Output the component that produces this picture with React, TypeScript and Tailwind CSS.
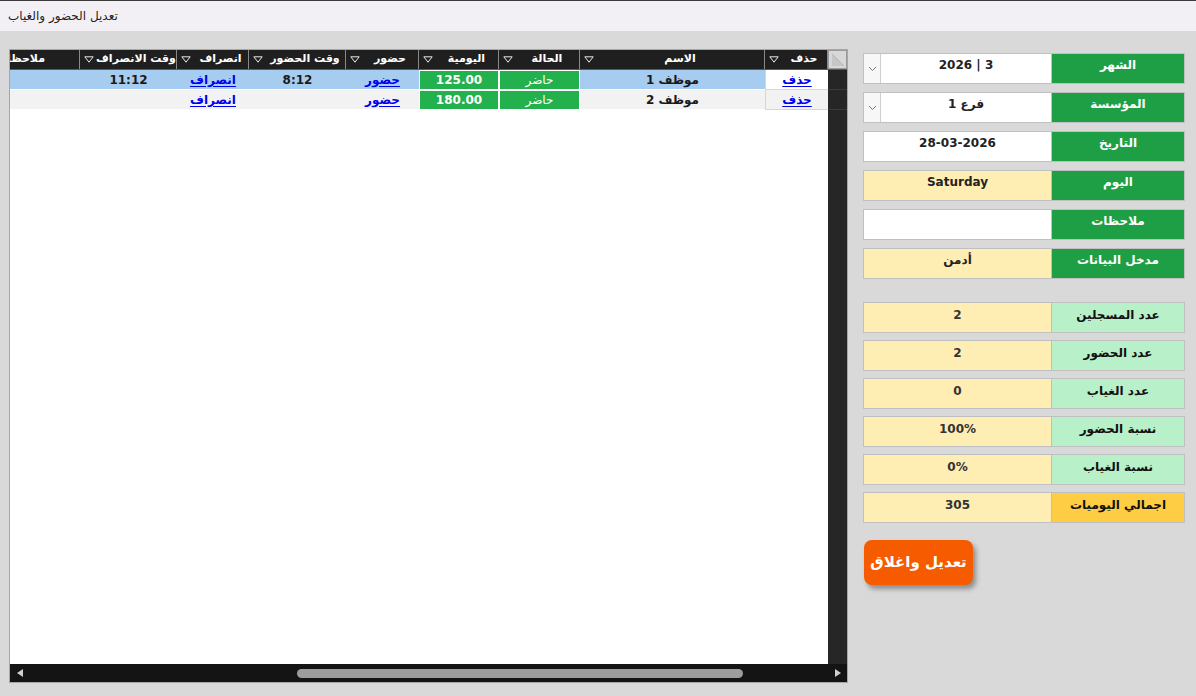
import React from 'react';

type Row = {
    name: string;
    status: string;
    daily: string;
    inTime: string;
    outTime: string;
    selected: boolean;
};

const rows: Row[] = [
    { name: 'موظف 1', status: 'حاضر', daily: '125.00', inTime: '8:12', outTime: '11:12', selected: true },
    { name: 'موظف 2', status: 'حاضر', daily: '180.00', inTime: '', outTime: '', selected: false },
];

// left-to-right on screen; the sheet itself reads right-to-left
const columns = [
    { title: 'وقت الانصراف', w: 'w-[97px]' },
    { title: 'انصراف', w: 'w-[72px]' },
    { title: 'وقت الحضور', w: 'w-[97px]' },
    { title: 'حضور', w: 'w-[73px]' },
    { title: 'اليومية', w: 'w-[80px]' },
    { title: 'الحالة', w: 'w-[81px]' },
    { title: 'الاسم', w: 'w-[185px]' },
    { title: 'حذف', w: 'w-[63px]' },
];

const infoFields = [
    { label: 'الشهر', value: '3 | 2026', combo: true, tone: 'white' },
    { label: 'المؤسسة', value: 'فرع 1', combo: true, tone: 'white' },
    { label: 'التاريخ', value: '28-03-2026', combo: false, tone: 'white' },
    { label: 'اليوم', value: 'Saturday', combo: false, tone: 'yellow' },
    { label: 'ملاحظات', value: '', combo: false, tone: 'white' },
    { label: 'مدخل البيانات', value: 'أدمن', combo: false, tone: 'yellow' },
];

const stats = [
    { label: 'عدد المسجلين', value: '2', total: false },
    { label: 'عدد الحضور', value: '2', total: false },
    { label: 'عدد الغياب', value: '0', total: false },
    { label: 'نسبة الحضور', value: '100%', total: false },
    { label: 'نسبة الغياب', value: '0%', total: false },
    { label: 'اجمالي اليوميات', value: '305', total: true },
];

function FilterArrow() {
    return (
        <svg width="10" height="7" viewBox="0 0 10 7" className="shrink-0">
            <path d="M0.8 0.8 H9.2 L5 6.2 Z" fill="none" stroke="#e8e8e8" strokeWidth="1" />
        </svg>
    );
}

function HeaderCell({ title, w }: { title: string; w: string }) {
    return (
        <div className={`${w} shrink-0 h-full flex items-center pl-[4px] border-r border-[#8a8a8a]`}>
            <FilterArrow />
            <span dir="rtl" className="flex-1 pl-[2px] text-center text-white font-bold text-[11px] whitespace-nowrap">
                {title}
            </span>
        </div>
    );
}

function LinkText({ children }: { children: React.ReactNode }) {
    return (
        <span dir="rtl" className="text-[#0000ee] font-bold underline underline-offset-2 text-[12px]">
            {children}
        </span>
    );
}

function GridRow({ row }: { row: Row }) {
    const bg = row.selected ? 'bg-[#a6cdef]' : 'bg-[#f2f2f2]';
    const cell = `shrink-0 h-full flex items-center justify-center border-b border-white text-[12px] font-bold text-[#1a1a1a] ${bg}`;
    const green = 'shrink-0 h-full flex items-center justify-center border border-white bg-[#22b14c] text-white text-[12px]';
    return (
        <div className="flex h-[20px]">
            <div className={`w-[70px] ${cell}`} />
            <div className={`w-[97px] ${cell}`}>{row.outTime}</div>
            <div className={`w-[72px] ${cell}`}>
                <LinkText>انصراف</LinkText>
            </div>
            <div className={`w-[97px] ${cell}`}>{row.inTime}</div>
            <div className={`w-[73px] ${cell}`}>
                <LinkText>حضور</LinkText>
            </div>
            <div className={`w-[80px] font-bold ${green}`}>{row.daily}</div>
            <div className={`w-[81px] ${green}`} dir="rtl">
                {row.status}
            </div>
            <div className={`w-[185px] ${cell}`} dir="rtl">
                {row.name}
            </div>
            <div
                className={`w-[63px] shrink-0 h-full flex items-center justify-center border-l border-b border-[#d6d6d6] ${
                    row.selected ? 'bg-white' : 'bg-[#f2f2f2]'
                }`}
            >
                <LinkText>حذف</LinkText>
            </div>
            <div className="w-[19px] shrink-0 h-full bg-[#262626] border-b border-[#3a3a3a]" />
        </div>
    );
}

function AttendanceGrid() {
    return (
        <div className="w-[839px] h-[634px] border border-[#a6a6a6] bg-white flex flex-col">
            {/* header */}
            <div className="flex h-[20px] bg-[#1f1f1f] border-b border-[#5a5a5a]">
                <div className="w-[70px] shrink-0 h-full overflow-hidden flex justify-end border-r border-[#8a8a8a]">
                    <div className="w-[132px] shrink-0 h-full flex items-center pl-[5px]">
                        <FilterArrow />
                        <span dir="rtl" className="flex-1 text-center text-white font-bold text-[11px] whitespace-nowrap">
                            ملاحظات
                        </span>
                    </div>
                </div>
                {columns.map((c) => (
                    <HeaderCell key={c.title} title={c.title} w={c.w} />
                ))}
                <div className="w-[19px] shrink-0 h-full bg-[#d8d8d8] border border-[#9a9a9a]">
                    <svg width="17" height="17" viewBox="0 0 17 17">
                        <path d="M3 3 L15 15 H3 Z" fill="#c6c6c6" />
                        <path d="M3 3 L15 15" stroke="#b4b4b4" strokeWidth="1" />
                    </svg>
                </div>
            </div>

            <div className="flex-1 flex flex-col min-h-0">
                {rows.map((r) => (
                    <GridRow key={r.name} row={r} />
                ))}
                <div className="flex-1 flex">
                    <div className="flex-1 bg-white" />
                    <div className="w-[19px] shrink-0 bg-[#262626]" />
                </div>
            </div>

            {/* horizontal scrollbar */}
            <div className="h-[18px] shrink-0 bg-[#141414] flex items-center px-[3px]">
                <svg width="10" height="10" viewBox="0 0 10 10" className="shrink-0 ml-[2px]">
                    <path d="M8 1 V9 L2 5 Z" fill="#d0d0d0" />
                </svg>
                <div className="w-[272px] shrink-0" />
                <div className="w-[446px] h-[9px] shrink-0 rounded-full bg-[#9c9c9c]" />
                <div className="flex-1" />
                <svg width="10" height="10" viewBox="0 0 10 10" className="shrink-0 mr-[1px]">
                    <path d="M2 1 V9 L8 5 Z" fill="#d0d0d0" />
                </svg>
            </div>
        </div>
    );
}

function ComboButton() {
    return (
        <div className="w-[17px] shrink-0 h-full bg-[#f7f7f7] border-r border-[#cfcfcf] flex items-center justify-center">
            <svg width="9" height="6" viewBox="0 0 9 6">
                <path d="M1 1 L4.5 4.5 L8 1" fill="none" stroke="#7a7a7a" strokeWidth="1" />
            </svg>
        </div>
    );
}

function InfoRow({ label, value, combo, tone }: { label: string; value: string; combo: boolean; tone: string }) {
    return (
        <div className="h-[31px] flex border border-[#c0c0c0]">
            <div className={`flex-1 flex ${tone === 'yellow' ? 'bg-[#ffeeb4]' : 'bg-white'}`}>
                {combo && <ComboButton />}
                <div dir="rtl" className="flex-1 text-center pt-[2px] text-[12px] font-bold text-[#222]">
                    {value}
                </div>
            </div>
            <div dir="rtl" className="w-[133px] shrink-0 bg-[#1e9e45] border-l border-[#c0c0c0] text-center pt-[2px] text-white font-bold text-[12px]">
                {label}
            </div>
        </div>
    );
}

function StatRow({ label, value, total }: { label: string; value: string; total: boolean }) {
    return (
        <div className="h-[31px] flex border border-[#c0c0c0]">
            <div className="flex-1 bg-[#ffeeb4] text-center pt-[3px] text-[12px] font-bold text-[#333]">{value}</div>
            <div
                dir="rtl"
                className={`w-[133px] shrink-0 border-l border-[#c0c0c0] text-center pt-[3px] text-[12px] font-bold text-[#111] ${
                    total ? 'bg-[#ffcd44]' : 'bg-[#b8f0c9]'
                }`}
            >
                {label}
            </div>
        </div>
    );
}

export default function App() {
    return (
        <div className="w-[1196px] h-[696px] bg-[#d9d9d9] flex flex-col font-['DejaVu_Sans',sans-serif] overflow-hidden">
            {/* window title */}
            <div className="h-[31px] shrink-0 bg-[#f3f0f5] border-t border-[#3a3a3a] flex items-center pl-[8px]">
                <span dir="rtl" className="text-[12px] text-[#1e1e1e]">
                    تعديل الحضور والغياب
                </span>
            </div>

            <div className="flex-1 flex pt-[18px] pl-[9px]">
                <AttendanceGrid />

                <div className="w-[322px] ml-[15px] pt-[4px] flex flex-col">
                    <div className="flex flex-col gap-[8px]">
                        {infoFields.map((f) => (
                            <InfoRow key={f.label} {...f} />
                        ))}
                    </div>
                    <div className="flex flex-col gap-[7px] mt-[23px]">
                        {stats.map((s) => (
                            <StatRow key={s.label} {...s} />
                        ))}
                    </div>
                    <div className="mt-[17px] pl-[1px]">
                        <button
                            dir="rtl"
                            className="w-[109px] h-[45px] rounded-[8px] bg-[#f65b00] text-white font-bold text-[15px] shadow-[3px_4px_5px_rgba(0,0,0,0.35)]"
                        >
                            تعديل واغلاق
                        </button>
                    </div>
                </div>
            </div>
        </div>
    );
}
